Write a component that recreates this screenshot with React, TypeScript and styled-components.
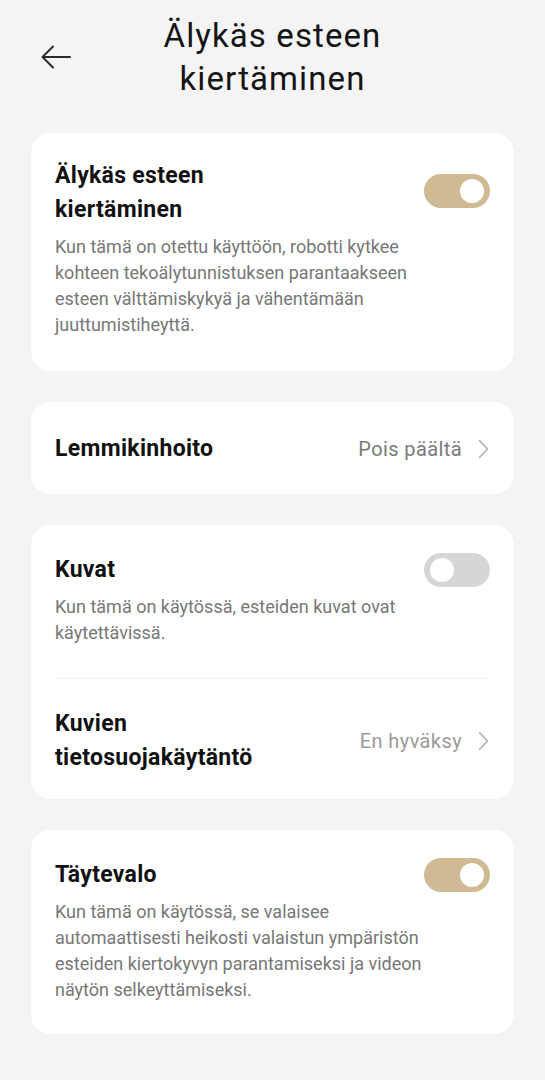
import styled, { createGlobalStyle } from "styled-components";

const GlobalStyle = createGlobalStyle`
  html, body {
    margin: 0;
    padding: 0;
    background-color: #f4f4f4;
  }
  body {
    font-family: Roboto, "Noto Sans", "Liberation Sans", sans-serif;
    -webkit-font-smoothing: antialiased;
  }
`;

const Page = styled.div`
  width: 545px;
  min-height: 1080px;
  box-sizing: border-box;
  padding: 14px 31px 40px;
  display: flex;
  flex-direction: column;
  gap: 31px;
`;

const Header = styled.header`
  display: grid;
  grid-template-columns: 56px 1fr 56px;
  align-items: center;
  margin: 0 0 2px;
`;

const BackButton = styled.button`
  border: none;
  background: none;
  padding: 0;
  margin-left: 10px;
  width: 30px;
  height: 24px;
  display: flex;
  align-items: center;
  cursor: pointer;
`;

const PageTitle = styled.h1`
  margin: 0 auto;
  max-width: 320px;
  text-align: center;
  font-size: 33px;
  letter-spacing: 1.1px;
  line-height: 43px;
  font-weight: 400;
  color: #141414;
`;

const Card = styled.section`
  background-color: #ffffff;
  border-radius: 20px;
  padding: 0 24px;
`;

const Row = styled.div<{ $top?: number; $bottom?: number }>`
  display: flex;
  align-items: flex-start;
  padding: ${(p) => p.$top ?? 28}px 0 ${(p) => p.$bottom ?? 32}px;
`;

const NavRow = styled.div<{ $top?: number; $bottom?: number }>`
  display: flex;
  align-items: center;
  padding: ${(p) => p.$top ?? 30}px 0 ${(p) => p.$bottom ?? 28}px;
  cursor: pointer;
`;

const Divider = styled.div`
  height: 1px;
  background-color: #efefef;
`;

const TextCol = styled.div`
  flex: 1;
  min-width: 0;
`;

const ItemTitle = styled.div`
  font-size: 23px;
  letter-spacing: 0.3px;
  line-height: 34px;
  font-weight: 700;
  color: #111111;
`;

const NarrowTitle = styled(ItemTitle)`
  max-width: 230px;
`;

const Description = styled.p`
  margin: 7px 0 0;
  font-size: 18px;
  line-height: 26px;
  color: #777777;
`;

const Switch = styled.div<{ $on: boolean }>`
  flex: none;
  width: 66px;
  height: 34px;
  border-radius: 17px;
  background-color: ${(p) => (p.$on ? "#cfba93" : "#d6d6d6")};
  display: flex;
  align-items: center;
  justify-content: ${(p) => (p.$on ? "flex-end" : "flex-start")};
  padding: 0 6px;
  box-sizing: border-box;
`;

const SwitchSlot = styled.div<{ $offset?: number }>`
  flex: none;
  margin-top: ${(p) => p.$offset ?? 0}px;
`;

const Knob = styled.div`
  width: 24px;
  height: 24px;
  border-radius: 50%;
  background-color: #ffffff;
`;

const Value = styled.span<{ $muted?: boolean }>`
  font-size: 20px;
  letter-spacing: 0.4px;
  color: ${(p) => (p.$muted ? "#9a9a9a" : "#7a7a7a")};
  margin-left: 12px;
  white-space: nowrap;
`;

const Chevron = styled.span`
  display: flex;
  margin-left: 16px;
  margin-right: 1px;
`;

function ChevronIcon() {
  return (
    <Chevron>
      <svg width="11" height="20" viewBox="0 0 11 20" fill="none">
        <path
          d="M1.5 1.5 L9.5 10 L1.5 18.5"
          stroke="#b0b0b0"
          strokeWidth="1.6"
          strokeLinecap="round"
          strokeLinejoin="round"
        />
      </svg>
    </Chevron>
  );
}

function Toggle({ on, offset }: { on: boolean; offset?: number }) {
  return (
    <SwitchSlot $offset={offset}>
      <Switch $on={on}>
        <Knob />
      </Switch>
    </SwitchSlot>
  );
}

export default function App() {
  return (
    <>
      <GlobalStyle />
      <Page>
        <Header>
          <BackButton aria-label="Takaisin">
            <svg width="30" height="24" viewBox="0 0 30 24" fill="none">
              <path
                d="M29 12 H2 M12 1.5 L1.5 12 L12 22.5"
                stroke="#2a2a2a"
                strokeWidth="2"
                strokeLinecap="round"
                strokeLinejoin="round"
              />
            </svg>
          </BackButton>
          <PageTitle>Älykäs esteen kiertäminen</PageTitle>
          <div />
        </Header>

        <Card>
          <Row $top={26} $bottom={33}>
            <TextCol>
              <NarrowTitle>Älykäs esteen kiertäminen</NarrowTitle>
              <Description>
                Kun tämä on otettu käyttöön, robotti kytkee kohteen
                tekoälytunnistuksen parantaakseen esteen välttämiskykyä ja
                vähentämään juuttumistiheyttä.
              </Description>
            </TextCol>
            <Toggle on offset={15} />
          </Row>
        </Card>

        <Card>
          <NavRow>
            <TextCol>
              <ItemTitle>Lemmikinhoito</ItemTitle>
            </TextCol>
            <Value>Pois päältä</Value>
            <ChevronIcon />
          </NavRow>
        </Card>

        <Card>
          <Row $top={28} $bottom={32}>
            <TextCol>
              <ItemTitle>Kuvat</ItemTitle>
              <Description>
                Kun tämä on käytössä, esteiden kuvat ovat käytettävissä.
              </Description>
            </TextCol>
            <Toggle on={false} />
          </Row>
          <Divider />
          <NavRow $top={28} $bottom={24}>
            <TextCol>
              <NarrowTitle>Kuvien tietosuojakäytäntö</NarrowTitle>
            </TextCol>
            <Value $muted>En hyväksy</Value>
            <ChevronIcon />
          </NavRow>
        </Card>

        <Card>
          <Row $top={28} $bottom={31}>
            <TextCol>
              <ItemTitle>Täytevalo</ItemTitle>
              <Description>
                Kun tämä on käytössä, se valaisee automaattisesti heikosti
                valaistun ympäristön esteiden kiertokyvyn parantamiseksi ja
                videon näytön selkeyttämiseksi.
              </Description>
            </TextCol>
            <Toggle on />
          </Row>
        </Card>
      </Page>
    </>
  );
}
